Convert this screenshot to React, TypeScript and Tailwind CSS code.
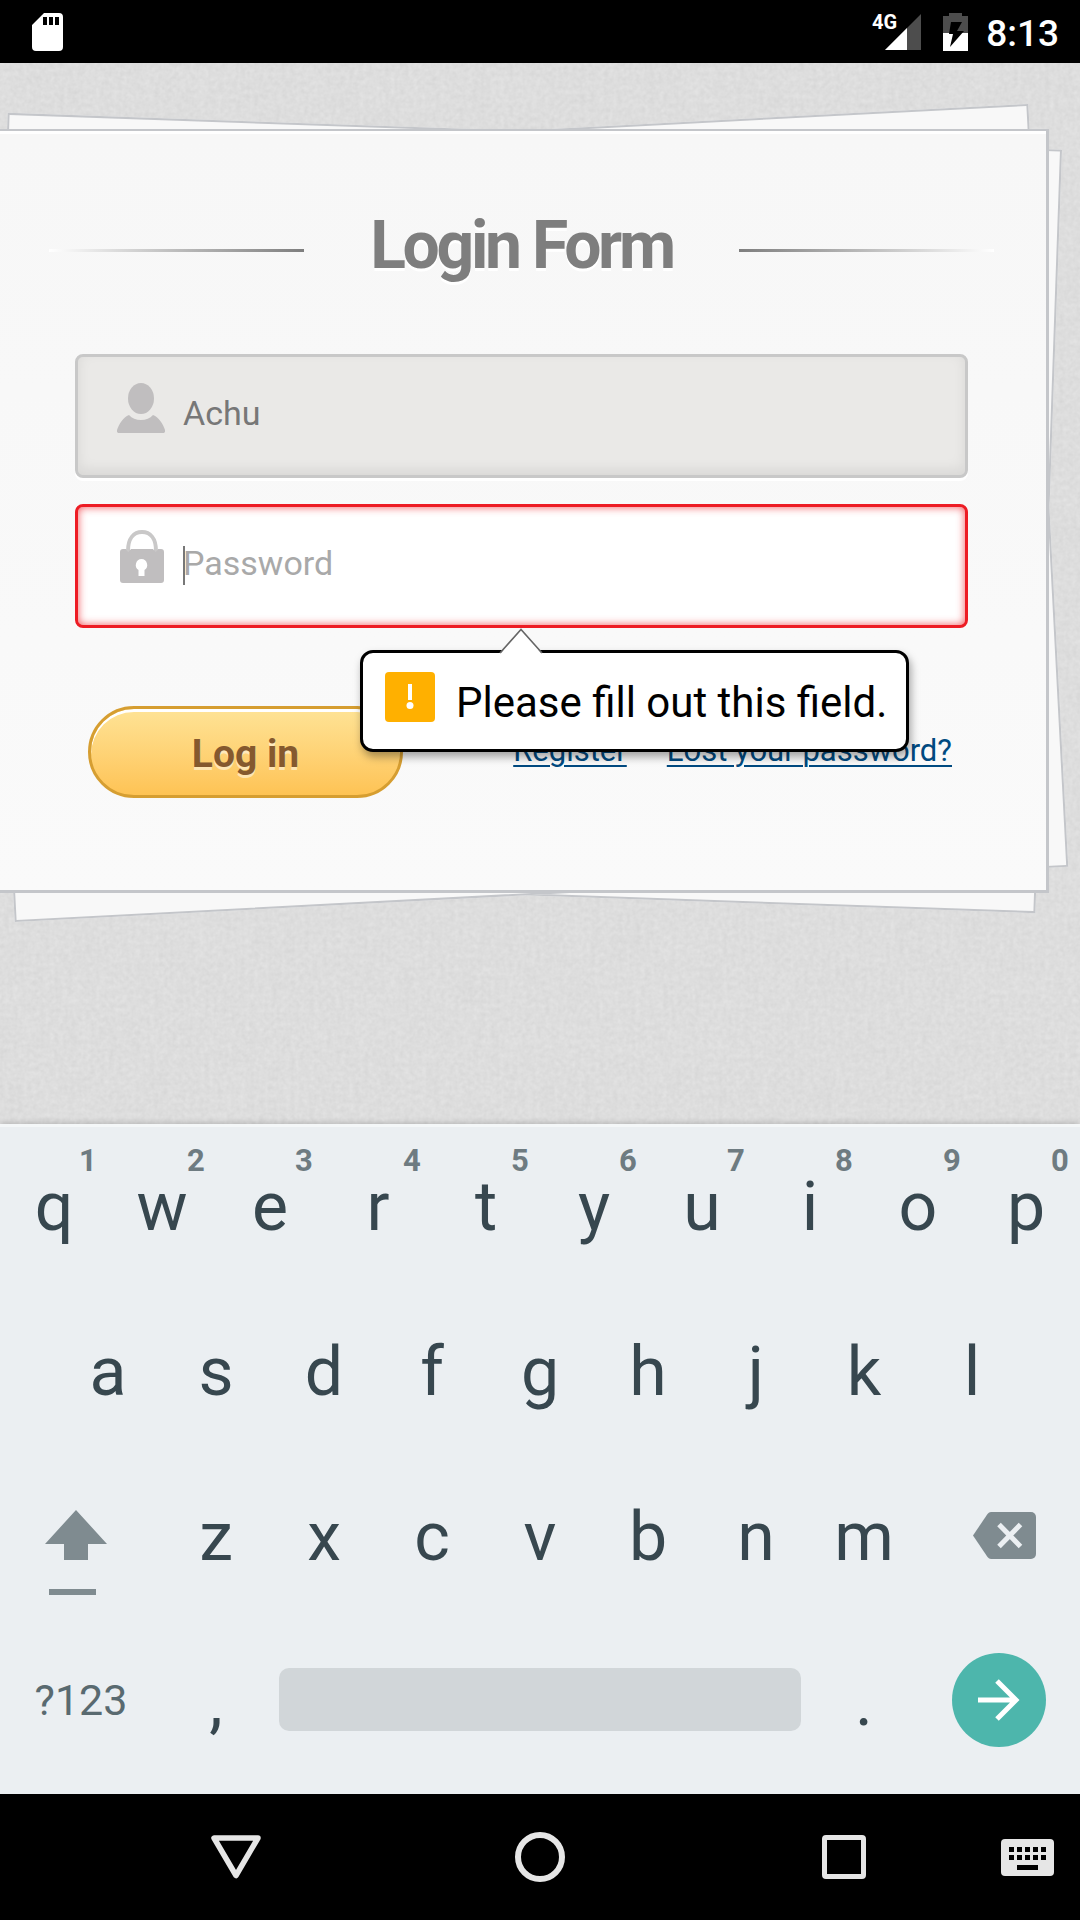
import React from "react";

function StatusBar() {
  return (
    <header className="flex h-[63px] items-center justify-between bg-black pr-[21px] pl-8 text-white">
      <svg className="h-[38px] w-[31px]" viewBox="0 0 31 38" aria-label="SD card">
        <path
          fillRule="evenodd"
          fill="#fff"
          d="M12 0h15a4 4 0 0 1 4 4v30a4 4 0 0 1-4 4H4a4 4 0 0 1-4-4V12zM11 4v8h4V4zm6 0v8h4V4zm6 0v8h4V4z"
        />
      </svg>
      <div className="flex items-center">
        <span className="mb-5 -mr-3 text-[20px] leading-none font-bold">4G</span>
        <svg className="h-9 w-9" viewBox="0 0 36 36" aria-hidden="true">
          <path d="M36 0v36H0z" fill="#4d4d4d" />
          <path d="M22 14v22H0z" fill="#fff" />
        </svg>
        <svg className="ml-[22px] h-[38px] w-[25px]" viewBox="0 0 25 38" aria-hidden="true">
          <path d="M6 0h13v3h6v17H0V3h6z" fill="#4d4d4d" />
          <path d="M0 20h25v18H0z" fill="#fff" />
          <path d="M8 9h11l-5 9h7L7 34l3-13H6z" fill="#000" />
        </svg>
        <span className="ml-[18px] pt-1 text-[37px] leading-10 font-medium">8:13</span>
      </div>
    </header>
  );
}

function LinenTexture() {
  return (
    <svg className="absolute inset-0 -z-20 h-full w-full" aria-hidden="true">
      <filter id="linen" x="0" y="0" width="100%" height="100%" colorInterpolationFilters="sRGB">
        <feTurbulence type="fractalNoise" baseFrequency="0.02 0.2" numOctaves="2" seed="3" result="rows" />
        <feTurbulence type="fractalNoise" baseFrequency="0.2 0.02" numOctaves="2" seed="8" result="cols" />
        <feTurbulence type="fractalNoise" baseFrequency="0.22" numOctaves="2" seed="5" result="grain" />
        <feComposite in="rows" in2="cols" operator="arithmetic" k2="0.4" k3="0.6" result="weave" />
        <feComposite in="weave" in2="grain" operator="arithmetic" k2="0.4" k3="0.6" />
        <feColorMatrix values="0.09 0 0 0 0.822  0.09 0 0 0 0.822  0.09 0 0 0 0.822  0 0 0 0 1" />
      </filter>
      <rect width="100%" height="100%" filter="url(#linen)" />
    </svg>
  );
}

function ValidationBubble({ message }: { message: string }) {
  return (
    <div className="absolute top-full left-[285px] z-10 mt-[22px]" role="alert">
      <div className="flex items-center rounded-[13px] border-[3px] border-black bg-white pt-[19px] pr-[19px] pb-[19px] pl-[22px] shadow-[2px_5px_8px_rgba(0,0,0,0.35)]">
        <svg className="mb-2 h-[50px] w-[50px] shrink-0" viewBox="0 0 50 50" aria-hidden="true">
          <rect width="50" height="50" rx="4" fill="#ffb000" />
          <rect x="23" y="12" width="4" height="16" fill="#fff" />
          <circle cx="25" cy="33.5" r="3.5" fill="#fff" />
        </svg>
        <span className="ml-[21px] pt-1 text-[42px] leading-[52px] whitespace-nowrap text-black">{message}</span>
      </div>
      <svg className="absolute -top-[22px] left-[138px] h-[26px] w-[46px]" viewBox="0 0 46 26" aria-hidden="true">
        <path d="M2 26 23 1.5 44 26z" fill="#fff" />
        <path d="M2 25 23 1.5 44 25" fill="none" stroke="#666" strokeWidth="1.6" />
      </svg>
    </div>
  );
}

const paper = "absolute inset-0 border-2 border-[#c4c6ca] bg-[#f8f8f8]";
const field =
  "block w-full rounded-lg border-[3px] pt-9 pr-6 pb-[42px] pl-[105px] text-[34px] leading-10 text-[#777] outline-none placeholder:text-[#a9a9a9]";

function LoginCard() {
  return (
    <div className="relative mr-[31px] -ml-1.5">
      <div className="absolute inset-x-0 top-0.5 -bottom-0.5">
        <div className={`${paper} rotate-2`} />
        <div className={`${paper} -rotate-3`} />
      </div>
      <form className="relative border-3 border-t-2 border-[#c4c6ca] bg-linear-to-b from-[#f7f7f7] to-[#fafafa] px-[52px] pt-[75px] pb-[92px] shadow-[inset_0_3px_0_#fff]">
        <div className="flex items-center justify-between">
          <span className="h-[3px] w-[27%] bg-linear-to-r from-white to-[#7e7e7e]" />
          <h1 className="pb-2 text-[66px] leading-[80px] font-bold tracking-tighter text-[#7e7e7e] [text-shadow:0_3px_0_#fff]">
            Login Form
          </h1>
          <span className="h-[3px] w-[27%] bg-linear-to-l from-white to-[#7e7e7e]" />
        </div>

        <div className="mt-[60px] flex flex-col gap-[26px] px-[26px]">
          <div className="relative">
            <label htmlFor="username" className="absolute top-7 left-[42px]">
              <svg className="h-[52px] w-12" viewBox="0 0 48 52" fill="#c0bebf" role="img" aria-label="Username">
                <ellipse cx="24" cy="16.5" rx="13" ry="15.5" />
                <path d="M12 33c3 3.5 7 5 12 5s9-1.5 12-5c6 2.5 10 9 12 15 .5 2-.5 3-2 3H2c-1.5 0-2.5-1-2-3 2-6 6-12.5 12-15z" />
              </svg>
            </label>
            <input
              id="username"
              type="text"
              defaultValue="Achu"
              className={`${field} border-[#c8c8c8] bg-[#eae9e7] shadow-[0_3px_0_#fff,inset_0_-5px_13px_rgba(0,0,0,0.08)]`}
            />
          </div>
          <div className="relative">
            <label htmlFor="password" className="absolute top-[26px] left-[45px]">
              <svg className="h-[54px] w-11" viewBox="0 0 44 54" role="img" aria-label="Password">
                <path d="M8 21C8 8 14 2 22 2s14 6 14 19" fill="none" stroke="#c9c8c8" strokeWidth="4" />
                <path
                  fillRule="evenodd"
                  fill="#c0bebf"
                  d="M3 19h3c1 3 3 3 5 0h22c2 3 4 3 5 0h3a3 3 0 0 1 3 3v28a3 3 0 0 1-3 3H3a3 3 0 0 1-3-3V22a3 3 0 0 1 3-3zm18.5 10a6 6 0 0 0-3 11v6h6v-6a6 6 0 0 0-3-11z"
                />
              </svg>
            </label>
            <input
              id="password"
              type="password"
              required
              placeholder="Password"
              className={`${field} border-[#ed1c24] bg-white shadow-[inset_0_0_8px_rgba(237,28,36,0.75)]`}
            />
            <span className="absolute top-[42px] left-[108px] h-[39px] w-[2px] bg-[#777]" />
            <ValidationBubble message="Please fill out this field." />
          </div>
        </div>

        <div className="mt-[78px] flex items-center justify-between pr-[42px] pl-[39px]">
          <button
            type="submit"
            className="h-[92px] w-[315px] rounded-full border-[3px] border-[#d69e31] bg-linear-to-b from-[#fee395] to-[#fec354] pt-1 text-[39px] font-bold text-[#85592e] shadow-[inset_0_3px_0_#fff] [text-shadow:0_3px_0_rgba(255,255,255,0.5)]"
          >
            Log in
          </button>
          <nav className="flex gap-10 pb-0.5 text-[31px] leading-10 text-[#004a80]">
            <a href="#register" className="underline decoration-2 underline-offset-4">
              Register
            </a>
            <a href="#lost" className="underline decoration-2 underline-offset-4">
              Lost your password?
            </a>
          </nav>
        </div>
      </form>
    </div>
  );
}

function Key({ label, hint }: { label: string; hint?: string }) {
  return (
    <button type="button" className="relative h-full flex-1 text-[68px] leading-[80px] text-[#37474f]">
      {hint && (
        <span className="absolute top-[19px] left-[79px] w-[18px] text-center text-[31px] leading-9 font-bold text-[#6e7b81]">
          {hint}
        </span>
      )}
      {label}
    </button>
  );
}

function Keyboard() {
  return (
    <section
      aria-label="Keyboard"
      className="relative bg-[#ebeff2] pb-[10px] shadow-[0_-2px_5px_rgba(0,0,0,0.15),inset_0_3px_0_#f4f7f8]"
    >
      <div className="flex h-[165px]">
        {"qwertyuiop".split("").map((c, i) => (
          <Key key={c} label={c} hint={String((i + 1) % 10)} />
        ))}
      </div>
      <div className="flex h-[165px] px-[5%]">
        {"asdfghjkl".split("").map((c) => (
          <Key key={c} label={c} />
        ))}
      </div>
      <div className="flex h-[165px]">
        <button type="button" aria-label="Shift" className="flex w-[15%] items-center justify-center pt-8 pr-[10px]">
          <svg className="h-[85px] w-[62px]" viewBox="0 0 62 85" fill="#7f8b90">
            <path d="M31 0l31 34H43v16H19V34H0z" />
            <path d="M4 79h47v6H4z" />
          </svg>
        </button>
        {"zxcvbnm".split("").map((c) => (
          <Key key={c} label={c} />
        ))}
        <button type="button" aria-label="Delete" className="flex w-[15%] items-center justify-center pb-[3px] pl-[10px]">
          <svg className="h-[47px] w-[63px]" viewBox="0 0 63 47">
            <path
              d="M18 0h40a5 5 0 0 1 5 5v37a5 5 0 0 1-5 5H18q-2 0-3.5-2L0 23.5 14.5 2Q16 0 18 0z"
              fill="#7f8b90"
            />
            <path d="M26 12.5 47.5 34.5M47.5 12.5 26 34.5" stroke="#ebeff2" strokeWidth="5" />
          </svg>
        </button>
      </div>
      <div className="flex h-[165px]">
        <button type="button" className="w-[15%] pb-0.5 text-[43px] text-[#596a70]">
          ?123
        </button>
        <button type="button" className="w-[10%] text-[68px] leading-[80px] text-[#37474f]">
          ,
        </button>
        <div className="flex w-1/2 items-center px-[9px] pb-1">
          <button type="button" aria-label="Space" className="h-[63px] w-full rounded-[10px] bg-[#d1d6d9]" />
        </div>
        <button type="button" className="w-[10%] text-[68px] leading-[80px] text-[#37474f]">
          .
        </button>
        <div className="flex w-[15%] items-center justify-center pb-[3px]">
          <button
            type="button"
            aria-label="Next"
            className="flex h-[94px] w-[94px] items-center justify-center rounded-full bg-[#4db6ac]"
          >
            <svg className="h-[42px] w-[42px]" viewBox="0 0 42 42" fill="none" stroke="#fff" strokeWidth="5">
              <path d="M0 21h38M19 2l19 19L19 40" />
            </svg>
          </button>
        </div>
      </div>
    </section>
  );
}

function NavigationBar() {
  return (
    <nav className="grid h-[126px] grid-cols-[84px_1fr_1fr_1fr_84px] bg-black" aria-label="System">
      <span />
      <button type="button" aria-label="Back" className="flex items-center justify-center">
        <svg className="h-[44px] w-[50px]" viewBox="0 0 50 44" fill="none" stroke="#e6e6e6" strokeWidth="5.5" strokeLinejoin="round">
          <path d="M3 3h44L25 40.5z" />
        </svg>
      </button>
      <button type="button" aria-label="Home" className="flex items-center justify-center">
        <span className="h-[50px] w-[50px] rounded-full border-[6px] border-[#e6e6e6]" />
      </button>
      <button type="button" aria-label="Recents" className="flex items-center justify-center">
        <span className="h-11 w-11 rounded-[4px] border-[5px] border-[#e6e6e6]" />
      </button>
      <button type="button" aria-label="Switch keyboard" className="flex items-center justify-center pr-[21px]">
        <svg className="h-[37px] w-[53px]" viewBox="0 0 53 37">
          <rect width="53" height="37" rx="4" fill="#e6e6e6" />
          <path
            fill="#000"
            d="M8 8h5v5H8zm8 0h5v5h-5zm8 0h5v5h-5zm8 0h5v5h-5zm8 0h5v5h-5zM8 16h5v5H8zm8 0h5v5h-5zm8 0h5v5h-5zm8 0h5v5h-5zm8 0h5v5h-5zM16 26h21v5H16z"
          />
        </svg>
      </button>
    </nav>
  );
}

export default function App() {
  return (
    <div className="flex min-h-screen flex-col font-['Roboto',sans-serif]">
      <StatusBar />
      <main className="relative isolate flex-1 overflow-hidden bg-[#dcdcdc] pt-[66px] pb-16">
        <LinenTexture />
        <LoginCard />
      </main>
      <Keyboard />
      <NavigationBar />
    </div>
  );
}
